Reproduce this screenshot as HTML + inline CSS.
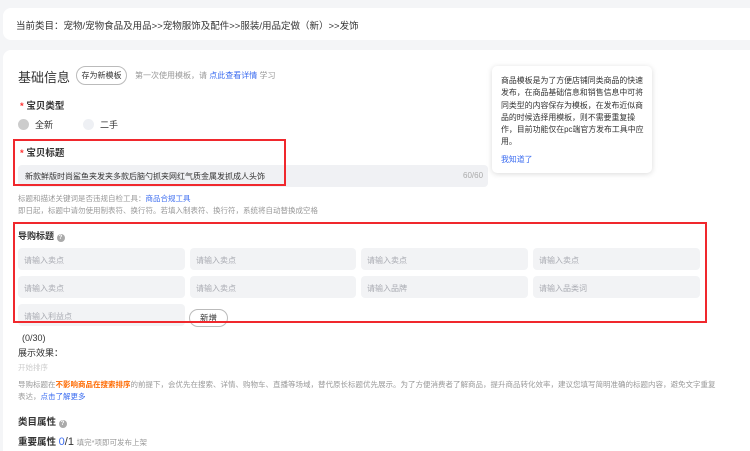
<!DOCTYPE html><html><head><meta charset="utf-8"><style>
*{margin:0;padding:0;box-sizing:border-box}
html,body{width:750px;height:451px;overflow:hidden}
body{background:#f4f5f7;font-family:"Liberation Sans","Noto Sans CJK SC",sans-serif;color:#333;position:relative}
.a{position:absolute;white-space:nowrap}
.card{position:absolute;background:#fff;border-radius:8px}
.in{position:absolute;background:#f2f3f5;border-radius:4px;height:22px;font-size:8px;color:#a9abb2;padding:7px 0 0 6px}
.s{font-size:8px;color:#999}
.b{color:#3b6cf0}
.rb{position:absolute;border:2px solid rgb(240,40,45);z-index:5}
</style></head><body>
<div class="card" style="left:3px;top:8px;width:760px;height:32px"></div>
<div class="a" style="left:16px;top:18px;font-size:9.5px;color:#333">当前类目：宠物/宠物食品及用品&gt;&gt;宠物服饰及配件&gt;&gt;服装/用品定做（新）&gt;&gt;发饰</div>
<div class="card" style="left:3px;top:50px;width:760px;height:420px"></div>
<div class="a" style="left:18px;top:67px;font-size:13px;color:#333">基础信息</div>
<div class="a" style="left:76px;top:66px;width:51px;height:19px;border:1px solid #bbb;border-radius:10px;font-size:8px;text-align:center;line-height:17px">存为新模板</div>
<div class="a s" style="left:135px;top:70px">第一次使用模板，请 <span class="b">点此查看详情</span> 学习</div>
<div class="a" style="left:20px;top:98px;font-size:9.5px;font-weight:bold"><span style="color:#f33">*</span> 宝贝类型</div>
<div class="a" style="left:18px;top:119px;width:11px;height:11px;border-radius:50%;background:#ccc"></div>
<div class="a" style="left:35px;top:118px;font-size:9px">全新</div>
<div class="a" style="left:83px;top:119px;width:11px;height:11px;border-radius:50%;background:#eef0f4"></div>
<div class="a" style="left:100px;top:118px;font-size:9px">二手</div>
<div class="a" style="left:20px;top:145px;font-size:9.5px;font-weight:bold"><span style="color:#f33">*</span> 宝贝标题</div>
<div class="a" style="left:18px;top:165px;width:470px;height:22px;background:#f0f1f4;border-radius:4px"></div>
<div class="a" style="left:25px;top:171px;font-size:8px;color:#333">新款鲜版时尚鲨鱼夹发夹多款后脑勺抓夹网红气质金属发抓成人头饰</div>
<div class="a" style="left:463px;top:171px;font-size:8px;color:#aaa">60/60</div>
<div class="a s" style="left:18px;top:193px;font-size:7.5px">标题和描述关键词是否违规自检工具：<span class="b">商品合规工具</span></div>
<div class="a s" style="left:18px;top:205px;font-size:7.5px">即日起，标题中请勿使用制表符、换行符。若填入制表符、换行符，系统将自动替换成空格</div>
<div class="a" style="left:492px;top:66px;width:160px;height:107px;background:#fff;border-radius:5px;box-shadow:0 1px 6px rgba(0,0,0,.15);padding:9px 4px 0 9px;font-size:7.9px;line-height:12.3px;color:#333;white-space:normal">商品模板是为了方便店铺同类商品的快速发布，在商品基础信息和销售信息中可将同类型的内容保存为模板，在发布近似商品的时候选择用模板，则不需要重复操作，目前功能仅在pc端官方发布工具中应用。<div class="b" style="margin-top:5px">我知道了</div></div>
<div class="a" style="left:18px;top:229px;font-size:9px;font-weight:bold">导购标题 <span style="display:inline-block;width:8px;height:8px;border-radius:50%;background:#aaa;color:#fff;font-size:6px;text-align:center;line-height:8px">?</span></div>
<div class="in" style="left:18px;top:248px;width:167px">请输入卖点</div>
<div class="in" style="left:190px;top:248px;width:166px">请输入卖点</div>
<div class="in" style="left:361px;top:248px;width:167px">请输入卖点</div>
<div class="in" style="left:533px;top:248px;width:167px">请输入卖点</div>
<div class="in" style="left:18px;top:276px;width:167px">请输入卖点</div>
<div class="in" style="left:190px;top:276px;width:166px">请输入卖点</div>
<div class="in" style="left:361px;top:276px;width:167px">请输入品牌</div>
<div class="in" style="left:533px;top:276px;width:167px">请输入品类词</div>
<div class="in" style="left:18px;top:304px;width:167px">请输入利益点</div>
<div class="a" style="left:189px;top:309px;width:39px;height:18px;border:1px solid #bbb;border-radius:9px;font-size:8.5px;text-align:center;line-height:16px;background:#fff">新增</div>
<div class="rb" style="left:13px;top:139px;width:273px;height:47px"></div>
<div class="rb" style="left:13px;top:222px;width:694px;height:101px"></div>
<div class="a" style="left:22px;top:333px;font-size:9px">(0/30)</div>
<div class="a" style="left:18px;top:346px;font-size:9px">展示效果：</div>
<div class="a" style="left:18px;top:362px;font-size:7.5px;color:#ccc">开始排序</div>
<div class="a s" style="left:18px;top:379px;font-size:7.5px">导购标题在<b style="color:#ff6a00">不影响商品在搜索排序</b>的前提下，会优先在搜索、详情、购物车、直播等场域，替代原长标题优先展示。为了方便消费者了解商品，提升商品转化效率，建议您填写简明准确的标题内容，避免文字重复</div>
<div class="a s" style="left:18px;top:391px;font-size:7.5px">表达，<span class="b">点击了解更多</span></div>
<div class="a" style="left:18px;top:414px;font-size:9.5px;font-weight:bold">类目属性 <span style="display:inline-block;width:8px;height:8px;border-radius:50%;background:#aaa;color:#fff;font-size:6px;text-align:center;line-height:8px">?</span></div>
<div class="a" style="left:18px;top:434px;font-size:9.5px;font-weight:bold">重要属性 <span class="b" style="font-weight:normal;font-size:11px">0</span><span style="font-weight:normal;font-size:11px">/1</span> <span class="s" style="font-weight:normal;font-size:7.5px">填完*项即可发布上架</span></div>
</body></html>
